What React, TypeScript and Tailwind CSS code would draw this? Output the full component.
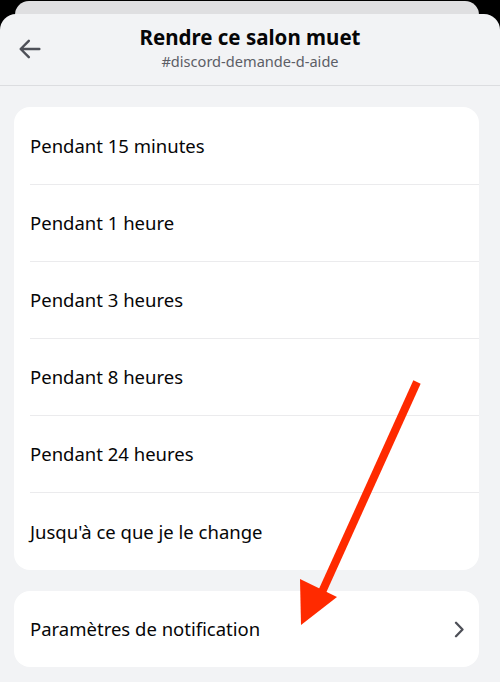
const rows = [
  "Pendant 15 minutes",
  "Pendant 1 heure",
  "Pendant 3 heures",
  "Pendant 8 heures",
  "Pendant 24 heures",
  "Jusqu'à ce que je le change",
];

export default function App() {
  return (
    <div
      className="relative h-[682px] w-[500px] overflow-hidden bg-black"
      style={{ fontFamily: '"Noto Sans", "Open Sans", sans-serif' }}
    >
      {/* sheet stacked behind */}
      <div className="absolute left-[15px] right-[21px] top-[1px] h-[40px] rounded-t-[14px] bg-[#dfdfe1]" />

      <div className="absolute inset-x-0 bottom-0 top-[14px] flex flex-col rounded-t-[16px] bg-[#f2f3f5]">
        <header className="relative flex h-[72px] flex-col items-center border-b border-[#dcdde0] pt-[9px]">
          <button className="absolute left-[16px] top-[21px] p-0 text-[#4e5058]">
            <svg width="28" height="28" viewBox="0 0 24 24" fill="none" stroke="currentColor" strokeWidth="2.1" strokeLinecap="round" strokeLinejoin="round">
              <path d="M20 12H4.5M11 5l-7 7 7 7" />
            </svg>
          </button>
          <h1 className="text-[20.5px] font-bold leading-[28px] text-[#060607]">Rendre ce salon muet</h1>
          <p className="mt-[1px] text-[14.6px] leading-[18px] text-[#5c5e66]">#discord-demande-d-aide</p>
        </header>

        <div className="flex flex-col gap-[21px] pl-[14px] pr-[21px] pt-[21px]">
          <div className="rounded-[16px] bg-white pl-[16px] pt-[1px]">
            {rows.map((r, i) => (
              <div
                key={r}
                className={`flex h-[77px] items-center text-[18.5px] text-[#060607] ${i < rows.length - 1 ? "border-b border-[#ebebed]" : ""}`}
              >
                {r}
              </div>
            ))}
          </div>

          <div className="flex h-[76px] items-center justify-between rounded-[16px] bg-white pl-[16px] pr-[15px] text-[18.5px] text-[#060607]">
            <span>Paramètres de notification</span>
            <svg width="10" height="17" viewBox="0 0 10 17" fill="none" stroke="#4e5058" strokeWidth="2.3" strokeLinecap="round" strokeLinejoin="round">
              <path d="M2 1.8l6.5 6.7L2 15.2" />
            </svg>
          </div>
        </div>
      </div>

      {/* red annotation arrow */}
      <svg className="absolute left-0 top-0" width="500" height="682" viewBox="0 0 500 682">
        <line x1="417" y1="382" x2="322" y2="592" stroke="#ff2a00" strokeWidth="8" />
        <polygon points="300,579 337,597 301,625" fill="#ff2a00" />
      </svg>
    </div>
  );
}
